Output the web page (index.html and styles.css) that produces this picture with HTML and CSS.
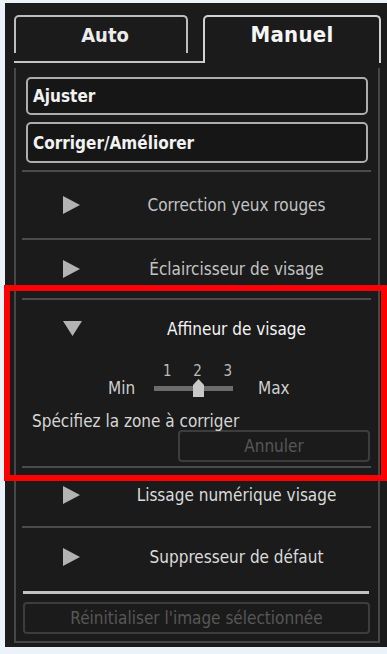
FILE: index.html
```html
<!DOCTYPE html>
<html lang="fr">
<head>
<meta charset="utf-8">
<title>Corriger/Améliorer</title>
<link rel="stylesheet" href="styles.css">
</head>
<body>
<div class="panel">
  <div class="tabs">
    <div class="tab-auto-wrap">
      <div class="tab tab-auto">Auto</div>
    </div>
    <div class="tab tab-manuel">Manuel</div>
  </div>
  <div class="frame">
    <div class="btn-main btn-ajuster">Ajuster</div>
    <div class="btn-main btn-corriger">Corriger/Améliorer</div>
    <div class="sep"></div>
    <div class="row row-1">
      <span class="tri"><svg width="17" height="18" viewBox="0 0 17 18"><polygon points="0,0 17,9 0,18" class="tri-fill"/></svg></span>
      <span class="label label-dim">Correction yeux rouges</span>
    </div>
    <div class="sep"></div>
    <div class="row row-2">
      <span class="tri"><svg width="17" height="18" viewBox="0 0 17 18"><polygon points="0,0 17,9 0,18" class="tri-fill"/></svg></span>
      <span class="label label-dim">Éclaircisseur de visage</span>
    </div>
    <div class="sep"></div>
    <div class="section">
      <div class="row row-head">
        <span class="tri tri-down"><svg width="19" height="15" viewBox="0 0 19 15"><polygon points="0,0 19,0 9.5,15" class="tri-fill"/></svg></span>
        <span class="label label-active">Affineur de visage</span>
      </div>
      <div class="slider-block">
        <span class="minmax">Min</span>
        <div class="slider">
          <div class="ticks"><span>1</span><span>2</span><span>3</span></div>
          <div class="track-row">
            <div class="track"></div>
            <svg class="thumb" width="11" height="18" viewBox="0 0 11 18"><polygon points="0,6 5.5,0 11,6 11,18 0,18" fill="#c9c9c9"/></svg>
          </div>
        </div>
        <span class="minmax max">Max</span>
      </div>
      <div class="spec">Spécifiez la zone à corriger</div>
      <div class="btn-off btn-annuler">Annuler</div>
    </div>
    <div class="sep"></div>
    <div class="row row-3">
      <span class="tri"><svg width="17" height="18" viewBox="0 0 17 18"><polygon points="0,0 17,9 0,18" class="tri-fill"/></svg></span>
      <span class="label">Lissage numérique visage</span>
    </div>
    <div class="sep"></div>
    <div class="row row-4">
      <span class="tri"><svg width="17" height="18" viewBox="0 0 17 18"><polygon points="0,0 17,9 0,18" class="tri-fill"/></svg></span>
      <span class="label">Suppresseur de défaut</span>
    </div>
    <div class="sep-light"></div>
    <div class="btn-off btn-reset">Réinitialiser l'image sélectionnée</div>
  </div>
  <div class="highlight"></div>
</div>
</body>
</html>
```
FILE: styles.css
```css
html, body {
  margin: 0;
  padding: 0;
}
body {
  background: #ebf2fa;
  font-family: "DejaVu Sans Condensed", "DejaVu Sans", sans-serif;
  font-stretch: condensed;
  font-size: 17px;
  color: #d6d6d6;
  width: 387px;
  height: 654px;
  overflow: hidden;
}
.panel {
  position: relative;
  margin: 3px 0 0 5px;
  width: 382px;
  height: 644px;
  background: #1b1b1b;
  padding-top: 12px;
  box-sizing: border-box;
}
.tabs {
  display: flex;
  align-items: flex-start;
  margin-left: 9px;
  height: 48px;
}
.tab-auto-wrap {
  width: 189px;
  height: 48px;
  border-bottom: 2px solid #c4c4c4;
  box-sizing: border-box;
}
.tab {
  display: flex;
  align-items: center;
  justify-content: center;
  box-sizing: border-box;
  font-weight: bold;
  color: #ececec;
}
.tab-auto {
  width: 174px;
  height: 38px;
  border: 2px solid #bdbdbd;
  border-bottom: none;
  border-radius: 5px 5px 0 0;
  font-size: 20px;
  padding-left: 8px;
}
.tab-manuel {
  width: 178px;
  height: 48px;
  border: 2px solid #d2d2d2;
  border-bottom: none;
  border-radius: 5px 5px 0 0;
  padding-bottom: 11px;
  font-size: 22px;
  color: #f6f6f6;
  letter-spacing: 0.3px;
}
.frame {
  margin: 5px 0 0 9px;
  padding-top: 9px;
  width: 366px;
  height: 575px;
  border: 2px solid #474747;
  border-top: none;
  box-sizing: border-box;
}
.btn-main {
  margin: 0 10px 0 10px;
  height: 38px;
  border: 2px solid #adadad;
  border-radius: 5px;
  box-sizing: border-box;
  display: flex;
  align-items: center;
  padding-left: 5px;
  font-weight: bold;
  color: #f2f2f2;
  background: #161616;
}
.btn-corriger {
  margin-top: 7px;
  height: 41px;
}
.sep {
  margin: 0 7px 0 6px;
  height: 2px;
  background: #4b4b4b;
}
.btn-corriger + .sep {
  margin-top: 7px;
}
.row {
  display: flex;
  align-items: center;
  padding-left: 47px;
  box-sizing: border-box;
  height: 58px;
}
.row-1 {
  height: 66px;
}
.row-3 {
  padding-bottom: 5px;
}
.row-4 {
  height: 63px;
  padding-bottom: 6px;
}
.tri {
  flex: none;
  width: 32px;
  display: flex;
  align-items: center;
}
.tri-down {
  padding-bottom: 2px;
}
.tri-fill {
  fill: #b3b3b3;
}
.label {
  flex: 1;
  text-align: center;
  color: #dcdcdc;
}
.label-dim {
  color: #c4c4c4;
}
.label-active {
  color: #f4f4f4;
}
.section {
  padding-bottom: 4px;
}
.slider-block {
  display: flex;
  align-items: flex-end;
  padding-left: 92px;
  padding-top: 6px;
}
.minmax {
  line-height: 18px;
  color: #cecece;
  width: 34px;
}
.max {
  margin-left: 25px;
}
.slider {
  width: 79px;
  margin-left: 12px;
}
.ticks {
  display: flex;
  justify-content: space-between;
  padding: 0 1px 0 9px;
  height: 15px;
  font-size: 15px;
  line-height: 15px;
  color: #bcbcbc;
}
.track-row {
  position: relative;
  height: 18px;
}
.track {
  position: relative;
  top: 7px;
  height: 5px;
  background: #6c6c6c;
}
.thumb {
  position: absolute;
  left: 39px;
  top: 0;
}
.spec {
  margin-top: 15px;
  padding-left: 16px;
  line-height: 18px;
  color: #d6d6d6;
}
.btn-off {
  height: 32px;
  border: 2px solid #3d3d3d;
  border-radius: 4px;
  box-sizing: border-box;
  display: flex;
  align-items: center;
  justify-content: center;
  color: #575757;
}
.btn-annuler {
  margin: 0 8px 0 162px;
}
.sep-light {
  margin: 0 9px 0 7px;
  height: 3px;
  background: #c2c2c2;
}
.btn-reset {
  margin: 8px 8px 0 7px;
}
.highlight {
  position: absolute;
  left: -1px;
  top: 282px;
  width: 383px;
  height: 196px;
  border: 6px solid #ff0000;
  box-sizing: border-box;
}
```
